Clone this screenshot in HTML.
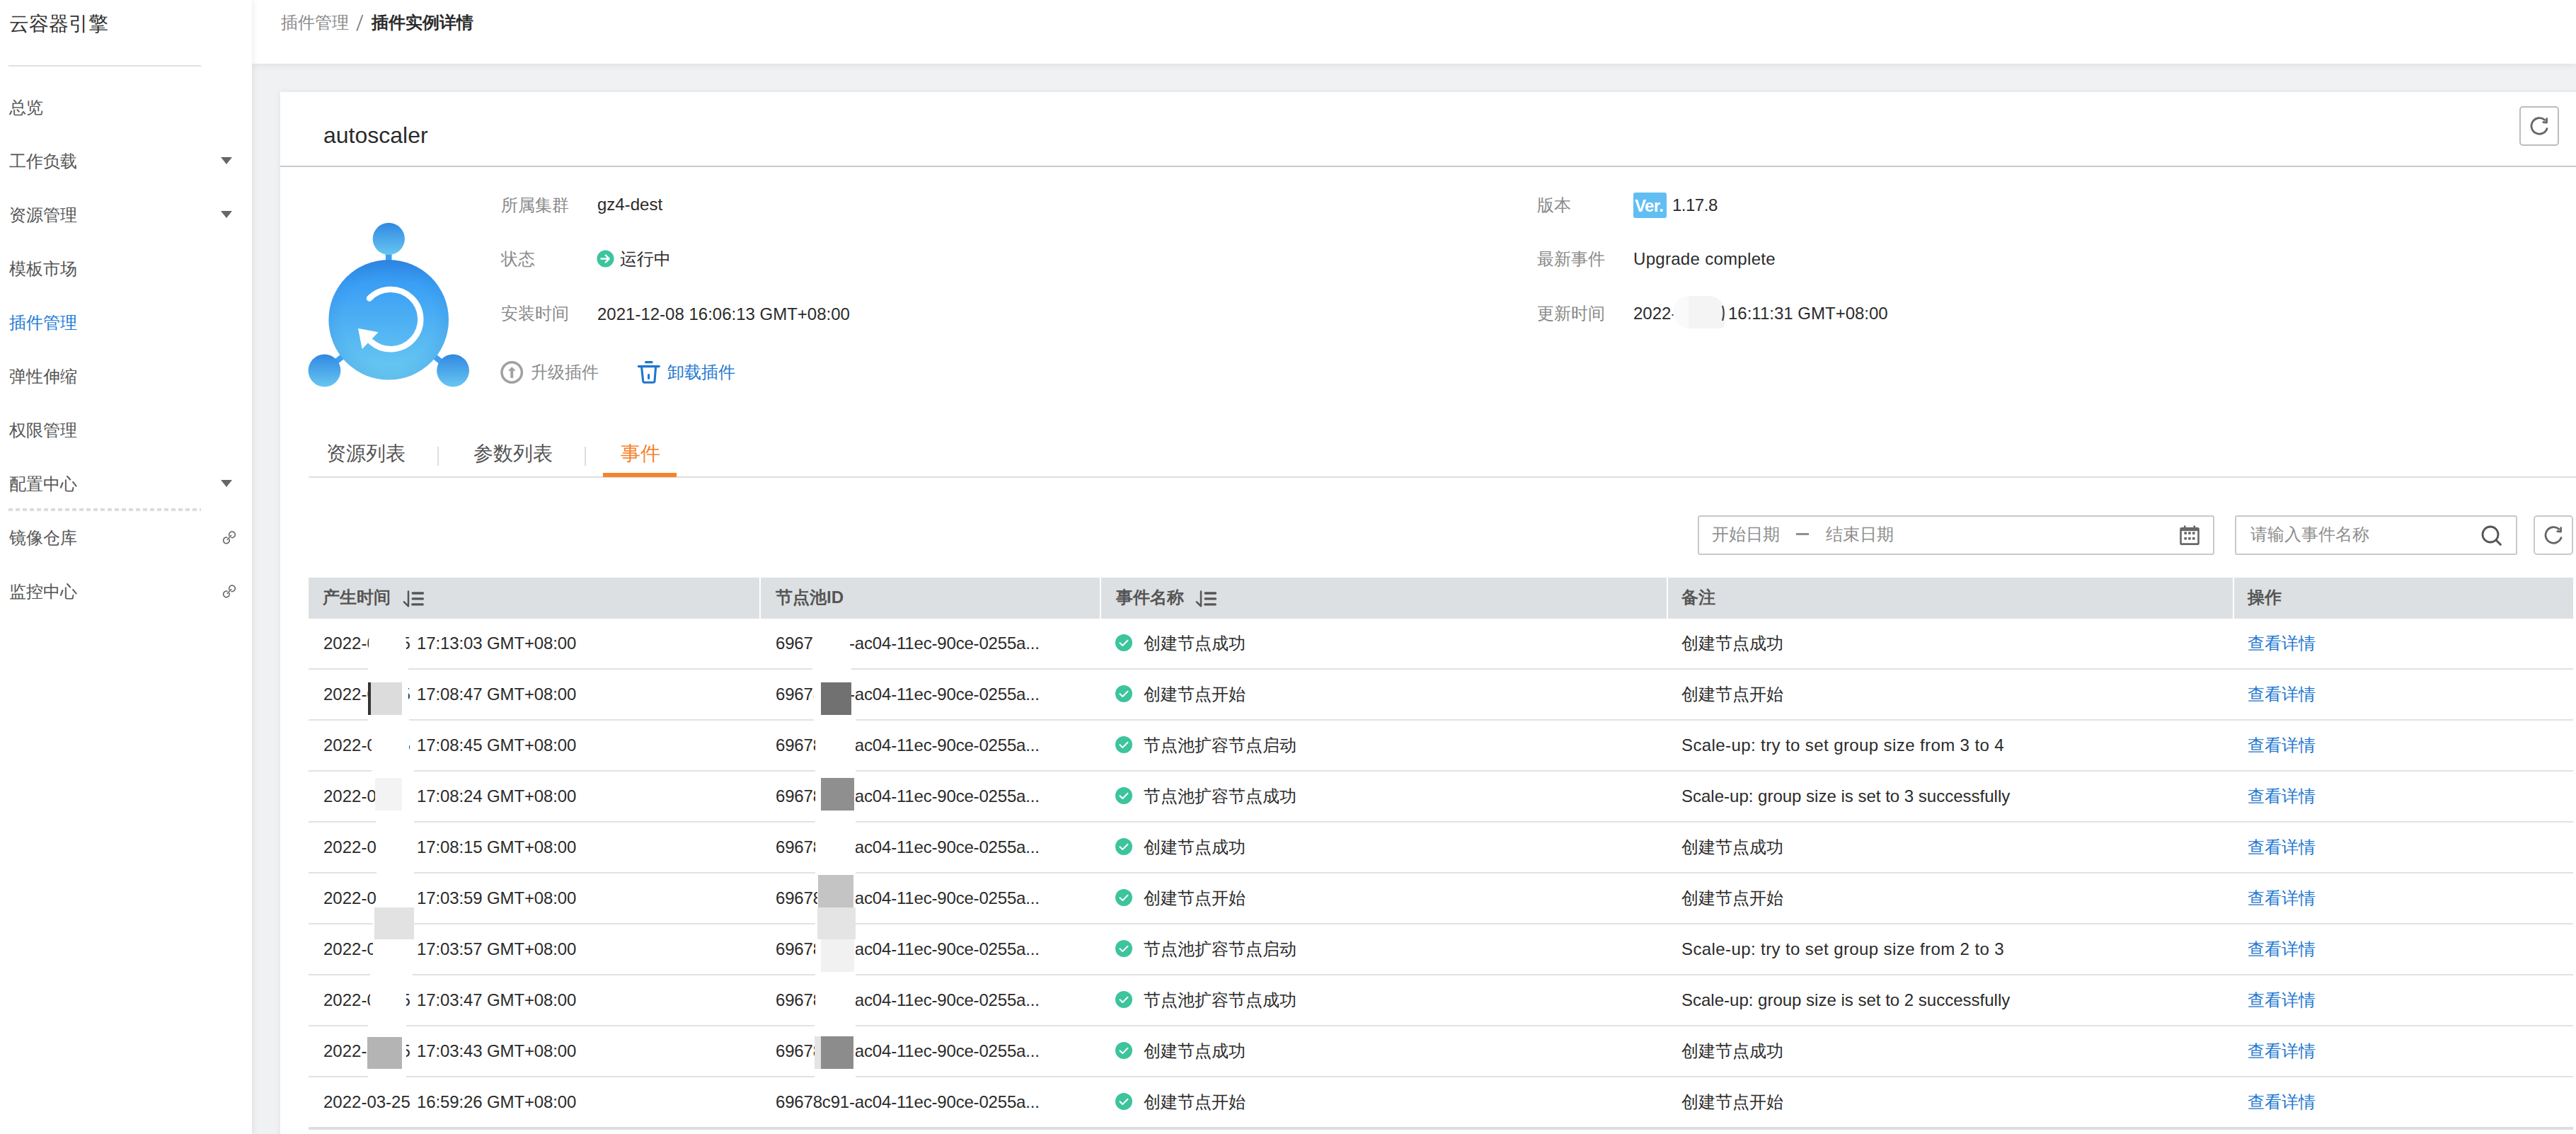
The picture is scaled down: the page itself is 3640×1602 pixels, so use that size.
<!DOCTYPE html>
<html><head><meta charset="utf-8">
<style>
*{margin:0;padding:0;box-sizing:border-box}
html,body{width:3640px;height:1602px;overflow:hidden;background:#f0f1f3;font-family:"Liberation Sans",sans-serif}
.a{position:absolute}
.t{position:absolute;white-space:nowrap;line-height:1}
#side{left:0;top:0;width:356px;height:1602px;background:#fff;box-shadow:2px 0 8px rgba(0,0,0,0.07);z-index:3}
#head{left:356px;top:0;width:3284px;height:90px;background:#fff;box-shadow:0 2px 10px rgba(0,0,0,0.07);z-index:2}
#card{left:396px;top:130px;width:3300px;height:1600px;background:#fff;box-shadow:0 0 8px rgba(0,0,0,0.07);z-index:1}
.nav{font-size:24px;color:#555;left:13px}
.tri{position:absolute;left:312px;width:0;height:0;border-left:8px solid transparent;border-right:8px solid transparent;border-top:10px solid #666}
.lbl{font-size:24px;color:#8a8a8a;z-index:4}
.val{font-size:24px;color:#2b2b2b;z-index:4}
.z4{z-index:4}.z5{z-index:5}.z6{z-index:6}
</style></head><body>

<div id="side" class="a">
<div class="t" style="left:13px;top:20px;font-size:28px;color:#333">云容器引擎</div>
<div class="a" style="left:12px;top:92px;width:272px;height:2px;background:#e1e1e1"></div>
<div class="t nav" style="top:140px">总览</div>
<div class="t nav" style="top:216px">工作负载</div>
<div class="tri" style="top:222px"></div>
<div class="t nav" style="top:292px">资源管理</div>
<div class="tri" style="top:298px"></div>
<div class="t nav" style="top:368px">模板市场</div>
<div class="t nav" style="top:444px;color:#1a7ad4">插件管理</div>
<div class="t nav" style="top:520px">弹性伸缩</div>
<div class="t nav" style="top:596px">权限管理</div>
<div class="t nav" style="top:672px">配置中心</div>
<div class="tri" style="top:678px"></div>
<div class="a" style="left:12px;top:718px;width:272px;height:4px;background:repeating-linear-gradient(90deg,#dcdcdc 0 6px,transparent 6px 10px)"></div>
<div class="t nav" style="top:748px">镜像仓库</div>
<svg class="a" style="left:300px;top:740px" width="50" height="40" viewBox="0 0 50 40"><path d="M24.2 17.32 A4.3 4.3 0 1 1 26.46 19.31 M23.73 21.45 A4.3 4.3 0 1 1 21.51 19.41" fill="none" stroke="#666" stroke-width="1.6"/><path d="M21.3 22.3 L26.7 16.5" fill="none" stroke="#666" stroke-width="1.6" stroke-linecap="round"/></svg>
<div class="t nav" style="top:824px">监控中心</div>
<svg class="a" style="left:300px;top:816px" width="50" height="40" viewBox="0 0 50 40"><path d="M24.2 17.32 A4.3 4.3 0 1 1 26.46 19.31 M23.73 21.45 A4.3 4.3 0 1 1 21.51 19.41" fill="none" stroke="#666" stroke-width="1.6"/><path d="M21.3 22.3 L26.7 16.5" fill="none" stroke="#666" stroke-width="1.6" stroke-linecap="round"/></svg>
</div>
<div id="head" class="a">
<div class="t" style="left:41px;top:20px;font-size:24px;color:#8a8a8a">插件管理</div>
<svg class="a" style="left:146px;top:18px" width="12" height="28" viewBox="0 0 12 28"><path d="M10.5 3 L2.2 25.6" stroke="#8a8a8a" stroke-width="2"/></svg>
<div class="t" style="left:169px;top:20px;font-size:24px;color:#2b2b2b;font-weight:bold">插件实例详情</div>
</div>
<div id="card" class="a"></div>
<div class="a z4" style="left:396px;top:234px;width:3244px;height:2px;background:#cacaca"></div>
<div class="t z4" style="left:457px;top:175px;font-size:32px;color:#2b2b2b">autoscaler</div>
<div class="a z4" style="left:3560px;top:150px;width:56px;height:56px;border:2px solid #bdbdbd;border-radius:5px"></div>
<svg class="a z5" style="left:3560px;top:150px" width="56" height="56" viewBox="0 0 56 56"><path d="M38.98 31.68 A11.3 11.3 0 1 1 35.7 19.4" fill="none" stroke="#666" stroke-width="2.8" stroke-linecap="round"/><path d="M33.8 22.7 L38.5 23.1 L38.7 17.6" fill="none" stroke="#666" stroke-width="2.8" stroke-linecap="round" stroke-linejoin="round"/></svg>
<svg class="a z4" style="left:420px;top:300px" width="260" height="260" viewBox="420 300 260 260">
<defs>
<linearGradient id="g1" x1="0" y1="0" x2="0" y2="1"><stop offset="0" stop-color="#2f87e2"/><stop offset="0.2" stop-color="#3a9ff5"/><stop offset="1" stop-color="#6ccbf1"/></linearGradient>
<linearGradient id="g2" x1="0" y1="0" x2="0" y2="1"><stop offset="0" stop-color="#3088e2"/><stop offset="1" stop-color="#68c6f1"/></linearGradient>
<radialGradient id="rg" cx="0.5" cy="0.5" r="0.5"><stop offset="0.75" stop-color="#1d6fd0" stop-opacity="0"/><stop offset="1" stop-color="#1d6fd0" stop-opacity="0.14"/></radialGradient>
</defs>
<rect x="545" y="355" width="8.5" height="16" fill="#3a9ff5"/>
<line x1="470" y1="515" x2="492" y2="497" stroke="#3a9ff5" stroke-width="8"/>
<line x1="628" y1="515" x2="606" y2="497" stroke="#3a9ff5" stroke-width="8"/>
<circle cx="549.2" cy="451.8" r="84.8" fill="url(#g1)"/>
<circle cx="549.2" cy="451.8" r="84.8" fill="url(#rg)"/>
<circle cx="549.3" cy="337.4" r="22.6" fill="url(#g2)"/>
<circle cx="458.5" cy="523.5" r="22.9" fill="url(#g2)"/>
<circle cx="640.1" cy="523.5" r="22.9" fill="url(#g2)"/>
<path d="M522 421.5 A42.2 42.2 0 1 1 524 482.5" fill="none" stroke="#fff" stroke-width="8.4" stroke-linecap="round"/>
<path d="M506 464 L534.6 469.2 L511.7 493 Z" fill="#fff"/>
</svg>
<div class="t lbl" style="left:708px;top:278px">所属集群</div>
<div class="t val" style="left:844px;top:277px">gz4-dest</div>
<div class="t lbl" style="left:708px;top:354px">状态</div>
<svg class="a z4" style="left:843px;top:353px" width="25" height="25" viewBox="0 0 25 25"><circle cx="12.5" cy="12.5" r="12" fill="#3cc49c"/><path d="M6.5 12.5 H17.5 M12.8 7.5 L17.8 12.5 L12.8 17.5" fill="none" stroke="#fff" stroke-width="2.4" stroke-linecap="round" stroke-linejoin="round"/></svg>
<div class="t val" style="left:876px;top:354px">运行中</div>
<div class="t lbl" style="left:708px;top:431px">安装时间</div>
<div class="t val" style="left:844px;top:432px">2021-12-08 16:06:13 GMT+08:00</div>
<div class="t lbl" style="left:2172px;top:278px">版本</div>
<div class="a z4" style="left:2308px;top:272px;width:47px;height:36px;background:#61bef2;border-radius:3px"></div>
<div class="t z5" style="left:2310px;top:279px;font-size:24px;color:#fff;font-weight:bold;letter-spacing:-0.6px">Ver.</div>
<div class="t val" style="left:2363px;top:278px;letter-spacing:-0.5px">1.17.8</div>
<div class="t lbl" style="left:2172px;top:354px">最新事件</div>
<div class="t val" style="left:2308px;top:354px;letter-spacing:0.3px">Upgrade complete</div>
<div class="t lbl" style="left:2172px;top:431px">更新时间</div>
<div class="t val" style="left:2308px;top:431px">2022-</div>
<div class="a z5" style="left:2364px;top:418px;width:73px;height:46px;background:linear-gradient(90deg,#fafafa 0 30%,#f4f4f4 30%);border-radius:28px 28px 6px 30px"></div>
<div class="t val" style="left:2442px;top:431px">16:11:31 GMT+08:00</div>
<svg class="a z6" style="left:2428px;top:428px" width="12" height="30" viewBox="0 0 12 30"><path d="M6 4 Q9.5 14 6 25" fill="none" stroke="#444" stroke-width="2.2"/></svg>
<svg class="a z4" style="left:705px;top:508px" width="36" height="36" viewBox="0 0 36 36"><circle cx="18.2" cy="18" r="14.2" fill="none" stroke="#a0a0a0" stroke-width="3.5"/><path d="M12.8 15.8 L18.3 10.3 L23.8 15.8 Z" fill="#a0a0a0"/><rect x="16.3" y="15" width="3.9" height="10.9" fill="#a0a0a0"/></svg>
<div class="t z4" style="left:750px;top:514px;font-size:24px;color:#8c8c8c">升级插件</div>
<svg class="a z4" style="left:898px;top:506px" width="38" height="38" viewBox="0 0 38 38"><path d="M14.6 5.7 H23" stroke="#1f76cf" stroke-width="3.3" stroke-linecap="round"/><path d="M4.4 11.6 H33.2" stroke="#1f76cf" stroke-width="3.3" stroke-linecap="round"/><path d="M8.6 12.5 L10.7 32.4 Q11 34.2 12.8 34.2 H25 Q26.8 34.2 27 32.4 L28.6 12.5" fill="none" stroke="#1f76cf" stroke-width="3.1" stroke-linejoin="round"/><path d="M18.6 23.6 V28.5" stroke="#1f76cf" stroke-width="3.1" stroke-linecap="round"/></svg>
<div class="t z4" style="left:943px;top:514px;font-size:24px;color:#1f78d1">卸载插件</div>
<div class="t z4" style="left:461px;top:627px;font-size:28px;color:#555">资源列表</div>
<div class="a z4" style="left:618px;top:631px;width:2px;height:27px;background:#dedede"></div>
<div class="t z4" style="left:669px;top:627px;font-size:28px;color:#555">参数列表</div>
<div class="a z4" style="left:826px;top:631px;width:2px;height:27px;background:#dedede"></div>
<div class="t z4" style="left:877px;top:627px;font-size:28px;color:#f5832c">事件</div>
<div class="a z4" style="left:436px;top:673px;width:3204px;height:2px;background:#dedede"></div>
<div class="a z5" style="left:852px;top:668px;width:104px;height:6px;background:#f5832c"></div>
<div class="a z4" style="left:2399px;top:728px;width:730px;height:56px;border:2px solid #c9c9c9;border-radius:3px;background:#fff"></div>
<div class="t z5" style="left:2419px;top:743px;font-size:24px;color:#8e8e8e">开始日期</div>
<div class="a z5" style="left:2538px;top:753px;width:18px;height:2.5px;background:#8e8e8e"></div>
<div class="t z5" style="left:2580px;top:743px;font-size:24px;color:#8e8e8e">结束日期</div>
<svg class="a z5" style="left:3078px;top:740px" width="32" height="32" viewBox="0 0 32 32"><rect x="3.5" y="6.3" width="25" height="22.3" rx="1.2" fill="none" stroke="#666" stroke-width="2.6"/><path d="M3.5 8.6 H28.5" stroke="#666" stroke-width="3"/><path d="M9.2 2.5 V7 M22.8 2.5 V7" stroke="#666" stroke-width="2.6"/><g fill="#666"><rect x="8.4" y="11.4" width="3.5" height="3.5"/><rect x="14.2" y="11.4" width="3.5" height="3.5"/><rect x="20" y="11.4" width="3.5" height="3.5"/><rect x="8.4" y="19" width="3.5" height="3.5"/><rect x="14.2" y="19" width="3.5" height="3.5"/><rect x="20" y="19" width="3.5" height="3.5"/></g></svg>
<div class="a z4" style="left:3158px;top:728px;width:399px;height:56px;border:2px solid #c9c9c9;border-radius:3px;background:#fff"></div>
<div class="t z5" style="left:3180px;top:743px;font-size:24px;color:#8e8e8e">请输入事件名称</div>
<svg class="a z5" style="left:3504px;top:740px" width="34" height="34" viewBox="0 0 34 34"><circle cx="15" cy="15" r="11" fill="none" stroke="#555" stroke-width="2.8"/><path d="M23 23 L29.3 29.3" stroke="#555" stroke-width="3" stroke-linecap="round"/></svg>
<div class="a z4" style="left:3580px;top:728px;width:56px;height:56px;border:2px solid #c9c9c9;border-radius:5px;background:#fff"></div>
<svg class="a z5" style="left:3580px;top:728px" width="56" height="56" viewBox="0 0 56 56"><path d="M38.98 31.68 A11.3 11.3 0 1 1 35.7 19.4" fill="none" stroke="#666" stroke-width="2.8" stroke-linecap="round"/><path d="M33.8 22.7 L38.5 23.1 L38.7 17.6" fill="none" stroke="#666" stroke-width="2.8" stroke-linecap="round" stroke-linejoin="round"/></svg>
<div class="a z4" style="left:436px;top:816px;width:3200px;height:58px;background:#dde0e2"></div>
<div class="a z5" style="left:1073px;top:816px;width:2px;height:58px;background:#fff"></div>
<div class="a z5" style="left:1554px;top:816px;width:2px;height:58px;background:#fff"></div>
<div class="a z5" style="left:2355px;top:816px;width:2px;height:58px;background:#fff"></div>
<div class="a z5" style="left:3155px;top:816px;width:2px;height:58px;background:#fff"></div>
<div class="t z5" style="left:456px;top:832px;font-size:24px;font-weight:bold;color:#555">产生时间</div>
<svg class="a z5" style="left:560px;top:828px" width="50" height="36" viewBox="0 0 50 36"><path d="M17 7.5 V28.3 L10.9 22.3" fill="none" stroke="#555" stroke-width="2.5" stroke-linecap="round" stroke-linejoin="round"/><path d="M23.2 10 H37.5 M23.2 17.9 H37.5 M22.8 25.9 H37.2" stroke="#555" stroke-width="3.3" stroke-linecap="round"/></svg>
<div class="t z5" style="left:1096px;top:832px;font-size:24px;font-weight:bold;color:#555">节点池ID</div>
<div class="t z5" style="left:1577px;top:832px;font-size:24px;font-weight:bold;color:#555">事件名称</div>
<svg class="a z5" style="left:1680px;top:828px" width="50" height="36" viewBox="0 0 50 36"><path d="M17 7.5 V28.3 L10.9 22.3" fill="none" stroke="#555" stroke-width="2.5" stroke-linecap="round" stroke-linejoin="round"/><path d="M23.2 10 H37.5 M23.2 17.9 H37.5 M22.8 25.9 H37.2" stroke="#555" stroke-width="3.3" stroke-linecap="round"/></svg>
<div class="t z5" style="left:2376px;top:832px;font-size:24px;font-weight:bold;color:#555">备注</div>
<div class="t z5" style="left:3176px;top:832px;font-size:24px;font-weight:bold;color:#555">操作</div>
<div class="a z4" style="left:436px;top:944px;width:3200px;height:2px;background:#e2e2e2"></div>
<div class="t val" style="left:457px;top:897px">2022-03-25</div>
<div class="t val" style="left:589px;top:897px;letter-spacing:-0.12px">17:13:03 GMT+08:00</div>
<div class="t val" style="left:1096px;top:897px;letter-spacing:-0.18px">69678c91-ac04-11ec-90ce-0255a...</div>
<svg class="a z4" style="left:1576px;top:896px" width="24" height="24" viewBox="0 0 24 24"><circle cx="12" cy="12" r="12" fill="#3cc49c"/><path d="M6.5 12.3 L10.3 16 L17.5 8.8" fill="none" stroke="#fff" stroke-width="2.0" stroke-linecap="round" stroke-linejoin="round"/></svg>
<div class="t val" style="left:1616px;top:897px">创建节点成功</div>
<div class="t val" style="left:2376px;top:897px;">创建节点成功</div>
<div class="t z4" style="left:3176px;top:897px;font-size:24px;color:#1f78d1">查看详情</div>
<div class="a z4" style="left:436px;top:1016px;width:3200px;height:2px;background:#e2e2e2"></div>
<div class="t val" style="left:457px;top:969px">2022-03-25</div>
<div class="t val" style="left:589px;top:969px;letter-spacing:-0.12px">17:08:47 GMT+08:00</div>
<div class="t val" style="left:1096px;top:969px;letter-spacing:-0.18px">69678c91-ac04-11ec-90ce-0255a...</div>
<svg class="a z4" style="left:1576px;top:968px" width="24" height="24" viewBox="0 0 24 24"><circle cx="12" cy="12" r="12" fill="#3cc49c"/><path d="M6.5 12.3 L10.3 16 L17.5 8.8" fill="none" stroke="#fff" stroke-width="2.0" stroke-linecap="round" stroke-linejoin="round"/></svg>
<div class="t val" style="left:1616px;top:969px">创建节点开始</div>
<div class="t val" style="left:2376px;top:969px;">创建节点开始</div>
<div class="t z4" style="left:3176px;top:969px;font-size:24px;color:#1f78d1">查看详情</div>
<div class="a z4" style="left:436px;top:1088px;width:3200px;height:2px;background:#e2e2e2"></div>
<div class="t val" style="left:457px;top:1041px">2022-03-25</div>
<div class="t val" style="left:589px;top:1041px;letter-spacing:-0.12px">17:08:45 GMT+08:00</div>
<div class="t val" style="left:1096px;top:1041px;letter-spacing:-0.18px">69678c91-ac04-11ec-90ce-0255a...</div>
<svg class="a z4" style="left:1576px;top:1040px" width="24" height="24" viewBox="0 0 24 24"><circle cx="12" cy="12" r="12" fill="#3cc49c"/><path d="M6.5 12.3 L10.3 16 L17.5 8.8" fill="none" stroke="#fff" stroke-width="2.0" stroke-linecap="round" stroke-linejoin="round"/></svg>
<div class="t val" style="left:1616px;top:1041px">节点池扩容节点启动</div>
<div class="t val" style="left:2376px;top:1041px;letter-spacing:0.4px;">Scale-up: try to set group size from 3 to 4</div>
<div class="t z4" style="left:3176px;top:1041px;font-size:24px;color:#1f78d1">查看详情</div>
<div class="a z4" style="left:436px;top:1160px;width:3200px;height:2px;background:#e2e2e2"></div>
<div class="t val" style="left:457px;top:1113px">2022-03-25</div>
<div class="t val" style="left:589px;top:1113px;letter-spacing:-0.12px">17:08:24 GMT+08:00</div>
<div class="t val" style="left:1096px;top:1113px;letter-spacing:-0.18px">69678c91-ac04-11ec-90ce-0255a...</div>
<svg class="a z4" style="left:1576px;top:1112px" width="24" height="24" viewBox="0 0 24 24"><circle cx="12" cy="12" r="12" fill="#3cc49c"/><path d="M6.5 12.3 L10.3 16 L17.5 8.8" fill="none" stroke="#fff" stroke-width="2.0" stroke-linecap="round" stroke-linejoin="round"/></svg>
<div class="t val" style="left:1616px;top:1113px">节点池扩容节点成功</div>
<div class="t val" style="left:2376px;top:1113px;">Scale-up: group size is set to 3 successfully</div>
<div class="t z4" style="left:3176px;top:1113px;font-size:24px;color:#1f78d1">查看详情</div>
<div class="a z4" style="left:436px;top:1232px;width:3200px;height:2px;background:#e2e2e2"></div>
<div class="t val" style="left:457px;top:1185px">2022-03-25</div>
<div class="t val" style="left:589px;top:1185px;letter-spacing:-0.12px">17:08:15 GMT+08:00</div>
<div class="t val" style="left:1096px;top:1185px;letter-spacing:-0.18px">69678c91-ac04-11ec-90ce-0255a...</div>
<svg class="a z4" style="left:1576px;top:1184px" width="24" height="24" viewBox="0 0 24 24"><circle cx="12" cy="12" r="12" fill="#3cc49c"/><path d="M6.5 12.3 L10.3 16 L17.5 8.8" fill="none" stroke="#fff" stroke-width="2.0" stroke-linecap="round" stroke-linejoin="round"/></svg>
<div class="t val" style="left:1616px;top:1185px">创建节点成功</div>
<div class="t val" style="left:2376px;top:1185px;">创建节点成功</div>
<div class="t z4" style="left:3176px;top:1185px;font-size:24px;color:#1f78d1">查看详情</div>
<div class="a z4" style="left:436px;top:1304px;width:3200px;height:2px;background:#e2e2e2"></div>
<div class="t val" style="left:457px;top:1257px">2022-03-25</div>
<div class="t val" style="left:589px;top:1257px;letter-spacing:-0.12px">17:03:59 GMT+08:00</div>
<div class="t val" style="left:1096px;top:1257px;letter-spacing:-0.18px">69678c91-ac04-11ec-90ce-0255a...</div>
<svg class="a z4" style="left:1576px;top:1256px" width="24" height="24" viewBox="0 0 24 24"><circle cx="12" cy="12" r="12" fill="#3cc49c"/><path d="M6.5 12.3 L10.3 16 L17.5 8.8" fill="none" stroke="#fff" stroke-width="2.0" stroke-linecap="round" stroke-linejoin="round"/></svg>
<div class="t val" style="left:1616px;top:1257px">创建节点开始</div>
<div class="t val" style="left:2376px;top:1257px;">创建节点开始</div>
<div class="t z4" style="left:3176px;top:1257px;font-size:24px;color:#1f78d1">查看详情</div>
<div class="a z4" style="left:436px;top:1376px;width:3200px;height:2px;background:#e2e2e2"></div>
<div class="t val" style="left:457px;top:1329px">2022-03-25</div>
<div class="t val" style="left:589px;top:1329px;letter-spacing:-0.12px">17:03:57 GMT+08:00</div>
<div class="t val" style="left:1096px;top:1329px;letter-spacing:-0.18px">69678c91-ac04-11ec-90ce-0255a...</div>
<svg class="a z4" style="left:1576px;top:1328px" width="24" height="24" viewBox="0 0 24 24"><circle cx="12" cy="12" r="12" fill="#3cc49c"/><path d="M6.5 12.3 L10.3 16 L17.5 8.8" fill="none" stroke="#fff" stroke-width="2.0" stroke-linecap="round" stroke-linejoin="round"/></svg>
<div class="t val" style="left:1616px;top:1329px">节点池扩容节点启动</div>
<div class="t val" style="left:2376px;top:1329px;letter-spacing:0.4px;">Scale-up: try to set group size from 2 to 3</div>
<div class="t z4" style="left:3176px;top:1329px;font-size:24px;color:#1f78d1">查看详情</div>
<div class="a z4" style="left:436px;top:1448px;width:3200px;height:2px;background:#e2e2e2"></div>
<div class="t val" style="left:457px;top:1401px">2022-03-25</div>
<div class="t val" style="left:589px;top:1401px;letter-spacing:-0.12px">17:03:47 GMT+08:00</div>
<div class="t val" style="left:1096px;top:1401px;letter-spacing:-0.18px">69678c91-ac04-11ec-90ce-0255a...</div>
<svg class="a z4" style="left:1576px;top:1400px" width="24" height="24" viewBox="0 0 24 24"><circle cx="12" cy="12" r="12" fill="#3cc49c"/><path d="M6.5 12.3 L10.3 16 L17.5 8.8" fill="none" stroke="#fff" stroke-width="2.0" stroke-linecap="round" stroke-linejoin="round"/></svg>
<div class="t val" style="left:1616px;top:1401px">节点池扩容节点成功</div>
<div class="t val" style="left:2376px;top:1401px;">Scale-up: group size is set to 2 successfully</div>
<div class="t z4" style="left:3176px;top:1401px;font-size:24px;color:#1f78d1">查看详情</div>
<div class="a z4" style="left:436px;top:1520px;width:3200px;height:2px;background:#e2e2e2"></div>
<div class="t val" style="left:457px;top:1473px">2022-03-25</div>
<div class="t val" style="left:589px;top:1473px;letter-spacing:-0.12px">17:03:43 GMT+08:00</div>
<div class="t val" style="left:1096px;top:1473px;letter-spacing:-0.18px">69678c91-ac04-11ec-90ce-0255a...</div>
<svg class="a z4" style="left:1576px;top:1472px" width="24" height="24" viewBox="0 0 24 24"><circle cx="12" cy="12" r="12" fill="#3cc49c"/><path d="M6.5 12.3 L10.3 16 L17.5 8.8" fill="none" stroke="#fff" stroke-width="2.0" stroke-linecap="round" stroke-linejoin="round"/></svg>
<div class="t val" style="left:1616px;top:1473px">创建节点成功</div>
<div class="t val" style="left:2376px;top:1473px;">创建节点成功</div>
<div class="t z4" style="left:3176px;top:1473px;font-size:24px;color:#1f78d1">查看详情</div>
<div class="a z4" style="left:436px;top:1592px;width:3200px;height:4px;background:#dddddd"></div>
<div class="t val" style="left:457px;top:1545px">2022-03-25</div>
<div class="t val" style="left:589px;top:1545px;letter-spacing:-0.12px">16:59:26 GMT+08:00</div>
<div class="t val" style="left:1096px;top:1545px;letter-spacing:-0.18px">69678c91-ac04-11ec-90ce-0255a...</div>
<svg class="a z4" style="left:1576px;top:1544px" width="24" height="24" viewBox="0 0 24 24"><circle cx="12" cy="12" r="12" fill="#3cc49c"/><path d="M6.5 12.3 L10.3 16 L17.5 8.8" fill="none" stroke="#fff" stroke-width="2.0" stroke-linecap="round" stroke-linejoin="round"/></svg>
<div class="t val" style="left:1616px;top:1545px">创建节点开始</div>
<div class="t val" style="left:2376px;top:1545px;">创建节点开始</div>
<div class="t z4" style="left:3176px;top:1545px;font-size:24px;color:#1f78d1">查看详情</div>
<div class="a z6" style="left:521px;top:882px;width:53px;height:64px;background:#fff;border-radius:24px 24px 0 0"></div>
<div class="a z6" style="left:1148px;top:880px;width:53px;height:66px;background:#fff;border-radius:24px 24px 0 0"></div>
<div class="a z6" style="left:520px;top:944px;width:57px;height:74px;background:#fff"></div>
<div class="a z6" style="left:1150px;top:944px;width:53px;height:74px;background:#fff"></div>
<div class="a z6" style="left:525px;top:1016px;width:53px;height:74px;background:#fff"></div>
<div class="a z6" style="left:1152px;top:1016px;width:57px;height:74px;background:#fff"></div>
<div class="a z6" style="left:531px;top:1088px;width:54px;height:74px;background:#fff"></div>
<div class="a z6" style="left:1152px;top:1088px;width:57px;height:74px;background:#fff"></div>
<div class="a z6" style="left:532px;top:1160px;width:53px;height:74px;background:#fff"></div>
<div class="a z6" style="left:1152px;top:1160px;width:57px;height:74px;background:#fff"></div>
<div class="a z6" style="left:532px;top:1232px;width:53px;height:74px;background:#fff"></div>
<div class="a z6" style="left:1155px;top:1232px;width:54px;height:74px;background:#fff"></div>
<div class="a z6" style="left:527px;top:1304px;width:56px;height:74px;background:#fff"></div>
<div class="a z6" style="left:1152px;top:1304px;width:57px;height:74px;background:#fff"></div>
<div class="a z6" style="left:523px;top:1376px;width:51px;height:74px;background:#fff"></div>
<div class="a z6" style="left:1152px;top:1376px;width:57px;height:74px;background:#fff"></div>
<div class="a z6" style="left:520px;top:1448px;width:54px;height:74px;background:#fff"></div>
<div class="a z6" style="left:1151px;top:1448px;width:58px;height:74px;background:#fff"></div>
<div class="a z6" style="left:524px;top:964px;width:44px;height:46px;background:#dcdcdc"></div>
<div class="a z6" style="left:520px;top:964px;width:4px;height:46px;background:#333"></div>
<div class="a z6" style="left:530px;top:1099px;width:38px;height:46px;background:#f3f3f3"></div>
<div class="a z6" style="left:529px;top:1282px;width:56px;height:45px;background:#e2e2e2"></div>
<div class="a z6" style="left:519px;top:1465px;width:49px;height:45px;background:#b4b4b4"></div>
<div class="a z6" style="left:1160px;top:964px;width:43px;height:46px;background:#717171"></div>
<div class="a z6" style="left:1160px;top:1099px;width:47px;height:46px;background:#8f8f8f"></div>
<div class="a z6" style="left:1156px;top:1236px;width:50px;height:46px;background:#c4c4c4"></div>
<div class="a z6" style="left:1155px;top:1282px;width:54px;height:45px;background:#e4e4e4"></div>
<div class="a z6" style="left:1160px;top:1327px;width:47px;height:46px;background:#f1f1f1"></div>
<div class="a z6" style="left:1160px;top:1464px;width:46px;height:46px;background:#8c8c8c"></div>
<div class="a z6" style="left:1151px;top:1464px;width:9px;height:46px;background:#e4e4e4"></div>
</body></html>
